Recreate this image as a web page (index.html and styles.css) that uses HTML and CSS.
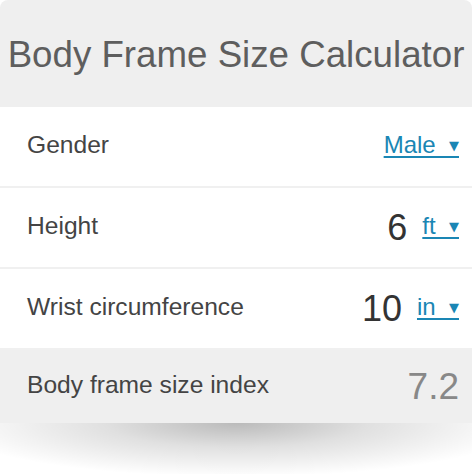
FILE: index.html
```html
<!DOCTYPE html>
<html>
<head>
<meta charset="utf-8">
<link rel="stylesheet" href="styles.css">
</head>
<body>
<div class="card">
  <div class="header">Body Frame Size Calculator</div>
  <div class="row">
    <span class="label">Gender</span>
    <span class="value"><a class="unit">Male&nbsp;&nbsp;<span class="caret">▼</span></a></span>
  </div>
  <div class="row">
    <span class="label">Height</span>
    <span class="value"><span class="num">6</span><a class="unit">ft&nbsp;&nbsp;<span class="caret">▼</span></a></span>
  </div>
  <div class="row">
    <span class="label">Wrist circumference</span>
    <span class="value"><span class="num">10</span><a class="unit">in&nbsp;&nbsp;<span class="caret">▼</span></a></span>
  </div>
  <div class="row result">
    <span class="label">Body frame size index</span>
    <span class="res">7.2</span>
  </div>
</div>
<div class="shadow"></div>
</body>
</html>
```
FILE: styles.css
```css
html, body {
  margin: 0;
  padding: 0;
  background: #fff;
}
body {
  font-family: "Liberation Sans", Arial, sans-serif;
}
.card {
  width: 472px;
  background: #fff;
  border-radius: 8px 8px 0 0;
}
.shadow {
  width: 472px;
  height: 54px;
  background: radial-gradient(ellipse 62% 100% at 50% 0, rgba(0,0,0,0.27) 0%, rgba(0,0,0,0.12) 45%, rgba(0,0,0,0) 100%);
}
.header {
  height: 107px;
  background: #efefef;
  color: #5e5e5e;
  font-size: 36.7px;
  display: flex;
  align-items: center;
  justify-content: center;
  padding-top: 3px;
  box-sizing: border-box;
  border-radius: 8px 8px 0 0;
}
.row {
  display: flex;
  align-items: center;
  justify-content: space-between;
  height: 79px;
  padding: 0 13px 0 27px;
  border-bottom: 2px solid #f0f0f0;
  box-sizing: content-box;
  background: #fff;
}
.label {
  font-size: 24.6px;
  color: #444;
  margin-top: -3px;
}
.value {
  display: flex;
  align-items: center;
}
.num {
  font-size: 36px;
  color: #333;
  margin-right: 15px;
}
.unit {
  font-size: 24px;
  color: #1a86b4;
  text-decoration: underline;
  text-underline-offset: 3px;
  margin-top: -3px;
}
.caret {
  font-family: "DejaVu Sans", sans-serif;
  font-size: 13px;
  vertical-align: 3px;
}
.result {
  background: #efefef;
  border-bottom: none;
  height: 73px;
}
.res {
  font-size: 37px;
  color: #888;
}
```
